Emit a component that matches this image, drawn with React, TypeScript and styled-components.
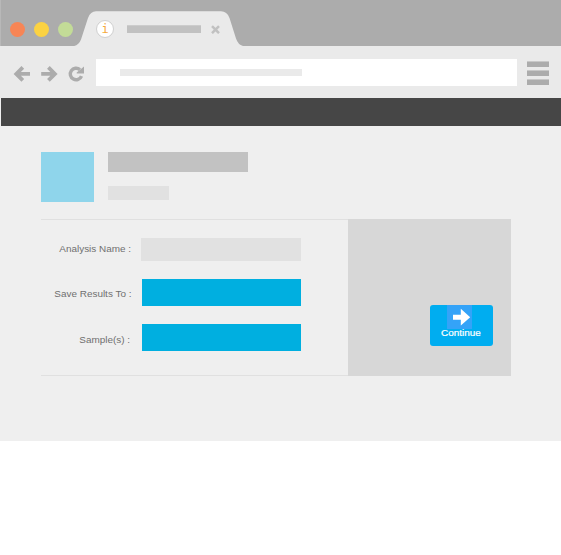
import React from "react";
import styled, { createGlobalStyle } from "styled-components";

const GlobalStyle = createGlobalStyle`
  *, *::before, *::after { box-sizing: border-box; }
  body { margin: 0; background: #fff; font-family: "Liberation Sans", Arial, sans-serif; }
  svg { display: block; flex: none; }
`;

const Browser = styled.div`
  width: 561px;
  height: 441px;
  background: #efefef;
  overflow: hidden;
`;

const TabStrip = styled.header`
  display: flex;
  height: 46px;
  background: #acacac;
  border-left: 1px solid #b8b8b8;
`;

const WindowControls = styled.div`
  display: flex;
  gap: 9.500px;
  width: 73px;
  padding: 21.500px 0 0 8.800px;
`;

const Dot = styled.span<{ $color: string }>`
  flex: none;
  width: 15px;
  height: 15px;
  border-radius: 50%;
  background: ${(p) => p.$color};

  &:last-child { margin-left: -1px; }
`;

const Tab = styled.div`
  position: relative;
  display: flex;
  align-items: center;
  width: 174px;
  height: 46px;
  padding: 12px 0 0 22px;
`;

const TabShape = styled.svg`
  position: absolute;
  inset: 0;
`;

const Favicon = styled.span`
  position: relative;
  display: flex;
  align-items: center;
  justify-content: center;
  width: 18px;
  height: 18px;
  border: 1px solid #d0d0d0;
  border-radius: 50%;
  background: #fff;
  color: #f5a93c;
  font: 12px/16px "DejaVu Sans Mono", monospace;
`;

const TabTitle = styled.span`
  position: relative;
  width: 74px;
  height: 8px;
  margin: 0 10px 0 13px;
  background: #c1c1c1;
  border-top: 1px solid #cccccc;
`;

const CloseIcon = styled.svg`
  position: relative;
`;

const Toolbar = styled.nav`
  display: flex;
  align-items: flex-start;
  height: 52px;
  padding: 13px 12px 0 13px;
  background: #eaeaea;
`;

const NavIcons = styled.div`
  display: flex;
  gap: 9px;
  width: 83px;
  padding-top: 6px;
`;

const AddressBar = styled.div`
  display: flex;
  width: 421px;
  height: 27px;
  padding: 10px 24px;
  background: #fff;
`;

const AddressText = styled.span`
  width: 182px;
  height: 7px;
  background: #eaeaea;
`;

const Menu = styled.div`
  display: flex;
  flex-direction: column;
  gap: 3px;
  margin: 2px 0 0 10px;
`;

const MenuBar = styled.span`
  width: 22px;
  height: 6px;
  background: #acacac;
  border-top: 1px solid #c8c8c8;
`;

const Banner = styled.div`
  height: 28px;
  margin-left: 1px;
  background: #464646;
`;

const Page = styled.main`
  padding: 26px 50px 0 41px;
`;

const Profile = styled.section`
  display: flex;
  gap: 14px;
  height: 67px;
`;

const Avatar = styled.div`
  width: 53px;
  height: 50px;
  background: #8fd5eb;
`;

const Heading = styled.div`
  display: flex;
  flex-direction: column;
  gap: 14px;
`;

const Placeholder = styled.div<{ $width: number; $height: number; $color: string }>`
  width: ${(p) => p.$width}px;
  height: ${(p) => p.$height}px;
  background: ${(p) => p.$color};
`;

const Panel = styled.section`
  display: flex;
  height: 157px;
`;

const Form = styled.form`
  display: flex;
  flex-direction: column;
  gap: 18px;
  width: 307px;
  padding-top: 18px;
  border: solid #e0e0e0;
  border-width: 1px 0;
`;

const Row = styled.div<{ $height: number }>`
  display: flex;
  height: ${(p) => p.$height}px;
  width: 260px;
  justify-content: space-between;
`;

const Label = styled.label<{ $indent: number; $top: number }>`
  padding: ${(p) => p.$top}px 0 0 ${(p) => p.$indent}px;
  color: #707070;
  font-size: 9.950px;
  line-height: 12px;
  white-space: nowrap;
`;

const Field = styled.div<{ $filled?: boolean }>`
  width: ${(p) => (p.$filled ? 159 : 160)}px;
  background: ${(p) => (p.$filled ? "#00afe0" : "#e1e1e1")};
`;

const Actions = styled.aside`
  display: flex;
  align-items: flex-start;
  justify-content: flex-end;
  width: 163px;
  padding: 86px 18px 0 0;
  background: #d7d7d7;
`;

const ContinueButton = styled.button`
  display: flex;
  flex-direction: column;
  align-items: center;
  width: 63px;
  height: 41px;
  padding: 0 1px 0 0;
  border: 0;
  border-radius: 3px;
  background: #00adf0;
  color: #fff;
  font: 9.950px/10px "Liberation Sans", Arial, sans-serif;
  -webkit-text-stroke: 0.2px #fff;
`;

const ArrowTile = styled.span`
  width: 25px;
  height: 24px;
  margin-right: 3px;
  flex: none;
  background: #34a3f8;
`;

const ButtonText = styled.span`
  margin-top: -1px;
`;

export default function App() {
  return (
    <>
      <GlobalStyle />
      <Browser>
        <TabStrip>
          <WindowControls>
            <Dot $color="#f78555" />
            <Dot $color="#fbd242" />
            <Dot $color="#c3dc97" />
          </WindowControls>
          <Tab>
            <TabShape width="174" height="46" viewBox="0 0 174 46">
              <path
                d="M-2 46.300 Q4.500 46 7 39.500 L14 18 Q16.500 11.300 22 11.300 H147 Q153 11.300 155.500 18 L162 38.500 Q164.500 46 171 46.300 Z"
                fill="#eaeaea"
              />
            </TabShape>
            <Favicon>i</Favicon>
            <TabTitle />
            <CloseIcon width="9" height="9" viewBox="0 0 9 9">
              <path d="M1 1.200 L8 8.200 M8 1.200 L1 8.200" stroke="#c1c1c1" strokeWidth="2.500" />
            </CloseIcon>
          </Tab>
        </TabStrip>
        <Toolbar>
          <NavIcons>
            <svg width="18" height="18" viewBox="0 0 18 18" fill="none" stroke="#acacac" strokeWidth="3.800">
              <path d="M9.800 2.400 L3.300 8.900 L9.800 15.400 M3.500 8.900 H17" />
            </svg>
            <svg width="18" height="18" viewBox="0 0 18 18" fill="none" stroke="#acacac" strokeWidth="3.800">
              <path d="M8.400 2.400 L14.900 8.900 L8.400 15.400 M1.200 8.900 H14.500" />
            </svg>
            <svg width="18" height="18" viewBox="0 0 18 18" fill="none">
              <path d="M12.900 4.600 A5.800 5.800 0 1 0 14.500 11.100" stroke="#acacac" strokeWidth="3.400" />
              <path d="M17 1.400 V8.600 H9.700 V7.400 Z" fill="#acacac" />
            </svg>
          </NavIcons>
          <AddressBar>
            <AddressText />
          </AddressBar>
          <Menu>
            <MenuBar />
            <MenuBar />
            <MenuBar />
          </Menu>
        </Toolbar>
        <Banner />
        <Page>
          <Profile>
            <Avatar />
            <Heading>
              <Placeholder $width={140} $height={20} $color="#c2c2c2" />
              <Placeholder $width={61} $height={14} $color="#e1e1e1" />
            </Heading>
          </Profile>
          <Panel>
            <Form>
              <Row $height={23}>
                <Label $indent={18.300} $top={5}>Analysis Name :</Label>
                <Field />
              </Row>
              <Row $height={27}>
                <Label $indent={13.300} $top={9}>Save Results To :</Label>
                <Field $filled />
              </Row>
              <Row $height={27}>
                <Label $indent={38.300} $top={10}>Sample(s) :</Label>
                <Field $filled />
              </Row>
            </Form>
            <Actions>
              <ContinueButton>
                <ArrowTile>
                  <svg width="25" height="24" viewBox="0 0 25 24">
                    <path d="M6 9.700 H13.800 V3.800 L23.200 12.200 L13.800 20.600 V14.800 H6 Z" fill="#fff" />
                  </svg>
                </ArrowTile>
                <ButtonText>Continue</ButtonText>
              </ContinueButton>
            </Actions>
          </Panel>
        </Page>
      </Browser>
    </>
  );
}
